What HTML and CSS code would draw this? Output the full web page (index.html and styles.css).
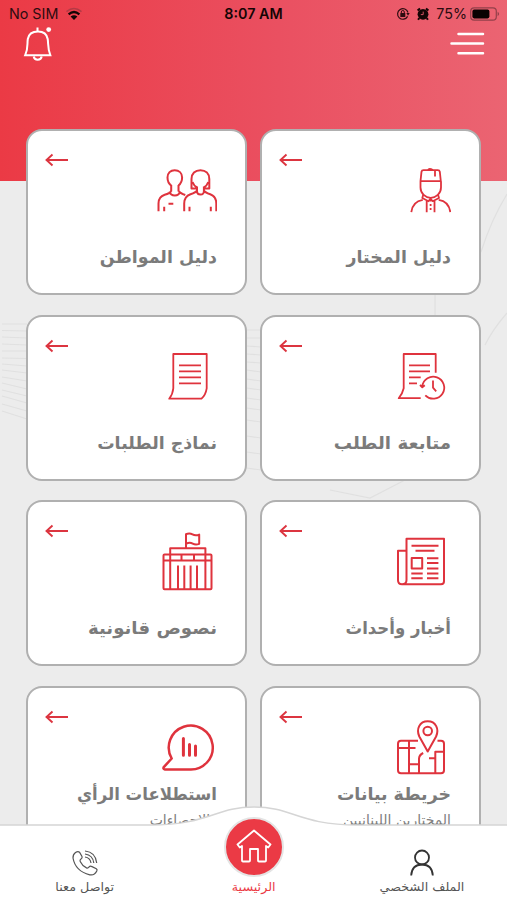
FILE: index.html
```
<!DOCTYPE html>
<html lang="ar" dir="rtl">
<head>
    <meta charset="UTF-8">
    <meta name="viewport" content="width=device-width, initial-scale=1.0">
    <title>الرئيسية</title>
    <link rel="stylesheet" href="styles.css">
</head>
<body>
    <div class="app">
        <!-- Background lines -->
        <svg class="pattern" viewBox="0 0 507 900">
            <path d="M2 324h25M2 330.500l25 .5M2 337l25 1M2 344l25 1M2 351h25M2 358l25 .5M2 364l25 2M2 370l25 3M2 377l25 4M2 383l25 6M2 390l25 6M2 396l25 7M2 404l25 7M2 411l25 8"/>
            <path d="M247 330h14M247 338h14M247 346l14 1M247 354l14 1M247 362l14 1M247 370l14 2M247 379l14 2M247 388l14 2M247 398l14 2M247 408l14 2M247 420l14 2M247 436l14 2M247 452l14 2M247 468l14 2"/>
            <path d="M481 252q10-32 26-58M485 345q8-16 22-32M435 315v-20M330 490l40 8 35-18"/>
        </svg>

        <!-- Status bar -->
        <div class="status" dir="ltr">
            <div class="status-side">
                <span>No SIM</span>
                <svg class="wifi" width="18" height="14" viewBox="0 0 18 14">
                    <path d="M1.5 4.6Q9-1.6 16.5 4.6" stroke="#b53a45" stroke-width="1.6" fill="none"/>
                    <path d="M3.6 7.3Q9 2.8 14.4 7.3" stroke="#150505" stroke-width="2.3" fill="none"/>
                    <path d="M5.6 9.5Q9 7 12.4 9.5L9 13z" fill="#150505"/>
                </svg>
            </div>
            <span class="time">8:07 AM</span>
            <div class="status-side status-right">
                <svg width="14" height="14" viewBox="0 0 14 14">
                    <path d="M11.6 9.4A5.3 5.3 0 1 1 12 5.5" stroke="#2c0c10" stroke-width="1.2" fill="none"/>
                    <path d="M10.3 6h3.4L12 8.7z" fill="#2c0c10"/>
                    <rect x="4.3" y="6" width="5" height="4" rx=".5" fill="#2c0c10"/>
                    <path d="M5.3 6V5a1.5 1.5 0 0 1 3 0v1" stroke="#2c0c10" fill="none"/>
                </svg>
                <svg width="14" height="14" viewBox="0 0 14 14">
                    <circle cx="7" cy="7.3" r="5.4" fill="#150505"/>
                    <path d="M1.6 3.6L4 1.4M12.4 3.6L10 1.4M3.3 11l-1.2 1.8M10.7 11l1.2 1.8" stroke="#150505" stroke-width="2"/>
                    <path d="M7.2 4.6v3H4.8" stroke="#e8596a" stroke-width=".9" fill="none"/>
                </svg>
                <span class="percent">75%</span>
                <svg width="30" height="14" viewBox="0 0 30 14">
                    <rect x=".7" y=".9" width="25.6" height="12.2" rx="3.4" stroke="#93404a" stroke-width="1.2" fill="none"/>
                    <rect x="2.4" y="2.6" width="17" height="8.8" rx="1.8" fill="#090202"/>
                    <path d="M27.6 4.8q3 2.2 0 4.4z" fill="#93404a"/>
                </svg>
            </div>
        </div>

        <!-- Top actions -->
        <div class="topbar" dir="ltr">
            <svg width="30" height="36" viewBox="0 0 30 36" fill="none" stroke="#fff" stroke-width="2">
                <path d="M2.2 28.2C5.400 21 4 17 4.800 12C5.700 6.800 9.400 4.500 15 4.500s8.800 2.300 9.700 7.500C25.500 17 24.500 21 27.300 28.200z"/>
                <path d="M14.500 4.500V.5M10.700 29.500q.6 3.300 4 3.300t4-3.300"/>
                <circle cx="25.700" cy="2.600" r="2.400" fill="#fff" stroke="none"/>
            </svg>
            <svg width="35" height="24" viewBox="0 0 35 24" stroke="#fff" stroke-width="2.500" stroke-linecap="round">
                <path d="M8.500 2H33M1.500 11.600H33M8.500 21.300H33"/>
            </svg>
        </div>

        <!-- Cards -->
        <div class="grid">
            <div class="card">
                <svg class="arrow" viewBox="0 0 24 14"><path d="M7.500 1.500L1.500 7l6 5.500M2 7h21"/></svg>
                <svg class="icon thin" viewBox="0 0 70 64">
                    <path d="M39.500 22.200l1-9.500q.3-1.500 2-1.500h14.300q1.700 0 2 1.500l1 9.500zM47 11q1-2 5 0M54 11v6.500M39.500 22.200v6.300c0 6 5 10.300 10.200 10.300S60 34.500 60 28.500v-6.300"/>
                    <path d="M42.300 35.500l-1 3.500 6.200 3.200 2-2.700 2.200 2.700 6.300-3.200-1-3.500M30.300 53.200c.8-7 4-11.200 11.500-12.400M69.300 53.200c-.8-7-4-11.200-11.600-12.400M45.700 42v11.200M53.500 42v11.200M49.600 39v3.500"/>
                    <path d="M49.600 45v2M49.600 49v2"/>
                </svg>
                <h2>دليل المختار</h2>
            </div>
            <div class="card">
                <svg class="arrow" viewBox="0 0 24 14"><path d="M7.500 1.500L1.500 7l6 5.500M2 7h21"/></svg>
                <svg class="icon" viewBox="0 0 70 64">
                    <path d="M24.200 26.500C21.500 24.500 20.500 21.500 20.500 18.500C20.500 14 23.500 11.200 27.700 11.200S35.100 14 35.100 18.500C35.100 21.500 34 24.500 31.500 26.500M24.200 26v6.500M31.500 26v6.500M22.500 32.500q1 4 5.300 4t5.200-4M24 32.300q-1 2-6.300 3.500-6.200 2-6.200 8.700v7.700M32 32.300q1 2 6.300 3.700"/>
                    <path d="M50 29.500h-5.500V20c0-5.500 3.600-8.800 8.900-8.800s8.900 3.300 8.900 8.800v9.500h-5.400M50 27.500V32q0 3.500 3.500 3.500T56.900 32v-4.500M45.500 23q1.500 4 4.500 5.500M61.300 23q-1.500 4-4.400 5.500M50 31.500q-1 2-6.500 3.700-6.300 2.300-6.300 9.300v7.700M56.900 31.500q1 2 6.300 3.700 6.100 2.300 6.100 9.300v7.700M17.200 47.800v4.400M42.500 47.800v4.400M63.800 47.800v4.400M21.500 44.700h4.800"/>
                </svg>
                <h2>دليل المواطن</h2>
            </div>
            <div class="card">
                <svg class="arrow" viewBox="0 0 24 14"><path d="M7.500 1.500L1.500 7l6 5.500M2 7h21"/></svg>
                <svg class="icon thin" viewBox="0 0 70 64">
                    <path d="M54.700 27.700V9h-32v34.300q-1 5-5 9.900h22M28 20.300h21M28 26.300h21M28 32.300h11.700M28 38.300h8"/>
                    <path d="M41.300 41.300A11 11 0 1 1 44.300 50.300M39 40l2.300 2.300 2.500-2M52 35.500v7.200l3.200 3.600"/>
                </svg>
                <h2 class="wide">متابعة الطلب</h2>
            </div>
            <div class="card">
                <svg class="arrow" viewBox="0 0 24 14"><path d="M7.500 1.500L1.500 7l6 5.500M2 7h21"/></svg>
                <svg class="icon thin" viewBox="0 0 70 64">
                    <path d="M26.300 9h33.400v34.300q-1 6.500-5.200 10.400H22.200q3.600-4.400 4.100-10.400zM32 20.300h22M32 26.300h22M32 32.300h22M32 38.300h22"/>
                </svg>
                <h2>نماذج الطلبات</h2>
            </div>
            <div class="card">
                <svg class="arrow" viewBox="0 0 24 14"><path d="M7.500 1.500L1.500 7l6 5.500M2 7h21"/></svg>
                <svg class="icon" viewBox="0 0 70 64">
                    <path d="M25.500 50V8.800H63v42.400q0 3-3 3H21q-4 0-4-4V20.800h8.500M25.500 50q0 4.200-4.500 4.200"/>
                    <path d="M30.500 15.800h27M34.500 20.800h19M30.700 28h10.500v10.500H30.700zM46 28.200h11.400M46 33h11.400M46 38.500h11.400M46 43.500h11.400M46 48.300h11.400M30.300 43.500h11.400M30.300 48.300h11.400"/>
                </svg>
                <h2 class="narrow">أخبار وأحداث</h2>
            </div>
            <div class="card">
                <svg class="arrow" viewBox="0 0 24 14"><path d="M7.500 1.500L1.500 7l6 5.500M2 7h21"/></svg>
                <svg class="icon" viewBox="0 0 70 64">
                    <path d="M39 18V4.200q3.500-1.600 6.500.2t6.700.2v9.200q-3.500 1.500-6.500-.2T39 13.800M23.200 59V18.300h35.200V59"/>
                    <rect x="16.500" y="24.500" width="48" height="34.700" rx="1"/>
                    <path d="M16.500 30.600h48M34.500 24.500v6M47 24.500v6M31 35.500V59M37.300 35.500V59M43.600 35.500V59M50 35.500V59"/>
                </svg>
                <h2 class="wide">نصوص قانونية</h2>
            </div>
            <div class="card card-sub">
                <svg class="arrow" viewBox="0 0 24 14"><path d="M7.500 1.500L1.500 7l6 5.500M2 7h21"/></svg>
                <svg class="icon" viewBox="0 0 70 64">
                    <path d="M37 24.700H20q-3 0-3 3v26.600q0 3 3 3h40q3 0 3-3V27.700q0-3-3-3h-3.500"/>
                    <path d="M46.700 35.500L38.300 20.500C35 13 38.500 5.300 46.700 5.300S58.400 13 55.100 20.500z"/>
                    <circle cx="46.700" cy="15" r="4.300"/>
                    <path d="M28 24.700v32.600M17 32h17.500M28 48.300h10M38 57.300V43q0-4 4.200-6M63 35.700h-8.700v21.600M48 42.300h6.300"/>
                </svg>
                <h2>خريطة بيانات</h2>
                <p>المختارين اللبنانيين</p>
            </div>
            <div class="card card-sub">
                <svg class="arrow" viewBox="0 0 24 14"><path d="M7.500 1.500L1.500 7l6 5.500M2 7h21"/></svg>
                <svg class="icon bold" viewBox="0 0 70 64">
                    <path d="M24.700 42.500A22 22 0 1 1 42.500 53.500H18q-2.500-.5-1-2.700z"/>
                    <path d="M36.400 22.500v16.800M42.500 28.500v10.800M48.500 30v9.300" stroke-width="3" stroke-linecap="round"/>
                </svg>
                <h2 class="narrow">استطلاعات الرأي</h2>
                <p>والإحصاءات</p>
            </div>
        </div>

        <!-- Bottom navigation -->
        <nav class="tabs">
            <svg class="tabs-bg" viewBox="0 0 507 95">
                <path d="M-2 20H150C210 20 215 2 254 2S298 20 358 20H510V100H-2z"/>
            </svg>
            <div class="tab">
                <svg width="28" height="28" viewBox="0 0 28 28" stroke="#333" stroke-width="1.800">
                    <circle cx="14" cy="8.500" r="7"/>
                    <path d="M3.200 26.500c.4-6.500 3.500-11 10.800-11S24.400 20 24.800 26.500"/>
                </svg>
                <span class="tab-wide">الملف الشخصي</span>
            </div>
            <div class="tab active">
                <div class="home">
                    <svg width="38" height="36" viewBox="0 0 38 36" stroke="#fff" stroke-width="1.800" stroke-linejoin="round">
                        <path d="M19 1.500L2.500 15.500l2.300 3L7 17v14.500q0 1 1 1h6q1 0 1-1V20h8v11.500q0 1 1 1h6q1 0 1-1V17l2.200 1.500 2.300-3z"/>
                    </svg>
                </div>
                <span class="tab-wide">الرئيسية</span>
            </div>
            <div class="tab">
                <svg width="28" height="28" viewBox="0 0 28 28" stroke="#555" stroke-width="1.200">
                    <path d="M4.500 3.500Q7 1.800 8.500 3.200L11 7.500q.6 1.500-1 2.500-1.500 1-.8 2.500 2.200 4.500 6.300 6.400 1.500.5 2.500-.9 1.200-1.400 2.500-.6l4.800 2.300q1.300.8.5 2.300-2.600 4.800-7 3.800C9.500 23.500 3.500 17.500 2 9Q1.800 5.500 4.500 3.500zM14 2q10.500 1 11.700 12M14 5q7.800 1 8.800 9M14 8q5.200.8 6 6"/>
                </svg>
                <span class="tab-wide">تواصل معنا</span>
            </div>
        </nav>
    </div>
</body>
</html>
```
FILE: styles.css
```
* {
    box-sizing: border-box;
}

body {
    margin: 0;
    font-family: "DejaVu Sans", sans-serif;
    background: #ececec;
}

svg {
    display: block;
    flex-shrink: 0;
    fill: none;
}

.app {
    position: relative;
    width: 507px;
    height: 900px;
    overflow: hidden;
    background: linear-gradient(to right, #eb3a45, #ea5061 55%, #eb6472) no-repeat top / 100% 181px, #ececec;
}

/* Faint lines behind the cards */
.pattern {
    position: absolute;
    inset: 0;
    stroke: #e0e0e0;
    stroke-width: 1.2;
}

.status {
    position: relative;
    display: grid;
    grid-template-columns: 1fr auto 1fr;
    align-items: center;
    height: 27px;
    padding: 0 7px 0 9px;
    font-family: Inter, sans-serif;
    font-size: 14.3px;
    color: #2c0c10;
}

.status-side {
    display: flex;
    align-items: center;
    gap: 7px;
}

.status-right {
    justify-content: flex-end;
    gap: 6px;
}

.percent {
    margin-right: -3px;
}

.time {
    position: relative;
    left: -1px;
    font-weight: 600;
    color: #150505;
}

.topbar {
    position: relative;
    display: flex;
    justify-content: space-between;
    height: 102px;
    padding: 0 22px 0 23px;
}

.topbar svg:last-child {
    margin-top: 5px;
}

.grid {
    position: relative;
    display: grid;
    grid-template-columns: 221px 221px;
    grid-auto-rows: 166px;
    gap: 19.5px 13px;
    padding: 0 26px;
}

.card {
    position: relative;
    background: #fff;
    border: 2px solid #b0b0b0;
    border-radius: 16px;
    padding: 28px 28px 0;
}

/* Arrow sits in the corner over the card */
.arrow {
    position: absolute;
    left: 17px;
    top: 22px;
    width: 24px;
    height: 14px;
    stroke: #dc3540;
    stroke-width: 1.9;
}

.icon {
    width: 70px;
    height: 64px;
    stroke: #df333d;
    stroke-width: 2;
    stroke-linejoin: round;
}

.thin {
    stroke-width: 1.8;
}

.bold {
    stroke-width: 2.5;
}

.card h2 {
    margin: 19px 0 0;
    font-size: 17.4px;
    line-height: 30px;
    font-weight: bold;
    color: #7b7b7b;
    white-space: nowrap;
    transform-origin: right;
}

.narrow {
    transform: scaleX(0.95);
}

.wide {
    transform: scaleX(1.045);
}

.card p {
    margin: 0;
    font-size: 14px;
    line-height: 22px;
    color: #808080;
    white-space: nowrap;
}

.card-sub h2 {
    margin-top: -1px;
}

.tabs {
    position: absolute;
    left: 0;
    right: 0;
    bottom: 0;
    height: 95px;
    display: grid;
    grid-template-columns: 170px 167px 170px;
}

.tabs-bg {
    position: absolute;
    inset: 0;
    fill: #fff;
    stroke: #d5d5d5;
    stroke-width: 1.5;
}

.tab {
    position: relative;
    display: flex;
    flex-direction: column;
    align-items: center;
    justify-content: flex-end;
    padding-bottom: 3px;
    font-size: 12px;
    line-height: 20px;
    color: #555;
}

.tab-wide {
    transform: scaleX(1.06);
}

.active {
    color: #eb3a45;
}

.home {
    display: flex;
    align-items: center;
    justify-content: center;
    width: 60px;
    height: 60px;
    border: 2px solid #e4e4e4;
    border-radius: 50%;
    background: #eb3a45;
}
```
